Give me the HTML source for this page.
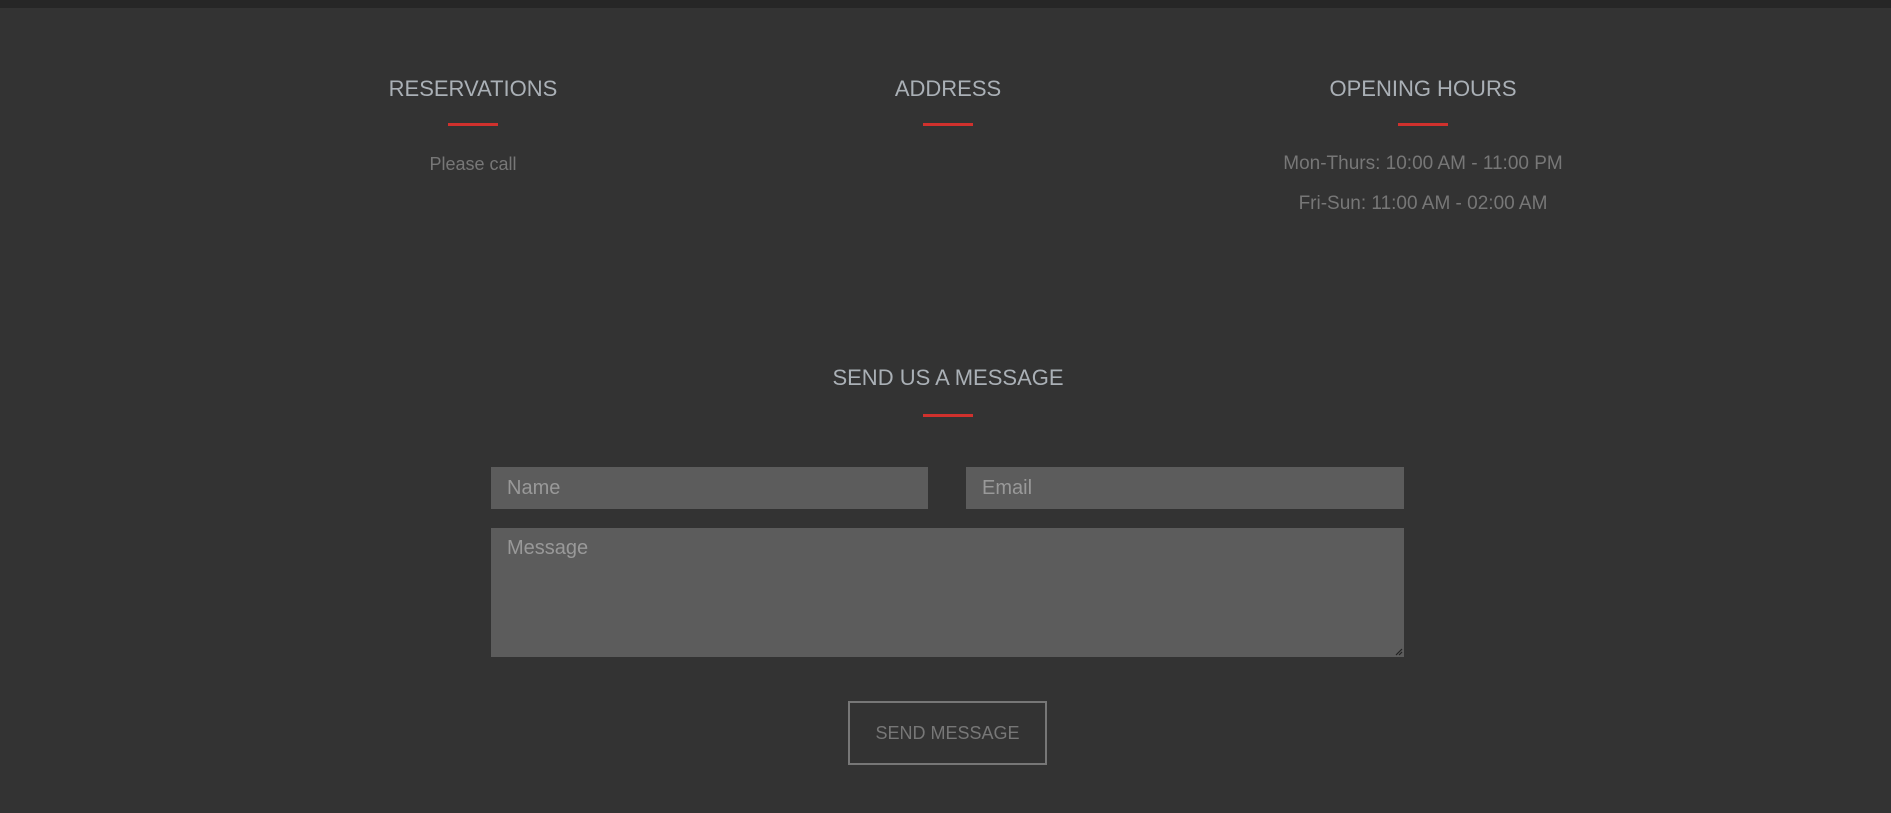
<!DOCTYPE html>
<html><head><meta charset="utf-8"><style>
*{margin:0;padding:0;box-sizing:border-box}
body{width:1891px;height:813px;background:#333;font-family:"Liberation Sans",sans-serif;position:relative;overflow:hidden}
.bar{position:absolute;left:0;top:0;width:100%;height:8px;background:#262626}
.h{position:absolute;color:#aab0b6;font-size:22px;text-align:center;width:476px;line-height:24px}
.r{position:absolute;height:3px;width:50px;background:#d0312d}
.t{position:absolute;color:#777;font-size:18px;text-align:center;width:476px;line-height:20px}
.in{position:absolute;background:#5c5c5c;color:#999;font-size:20px;padding-left:16px}
.btn{position:absolute;left:848px;top:701px;width:199px;height:64px;border:2px solid #777;color:#777;font-size:18px;text-align:center;line-height:60px}
</style></head><body>
<div class="bar"></div>
<div class="h" style="left:235px;top:77px">RESERVATIONS</div>
<div class="h" style="left:710px;top:77px">ADDRESS</div>
<div class="h" style="left:1185px;top:77px">OPENING HOURS</div>
<div class="r" style="left:448px;top:123px"></div>
<div class="r" style="left:923px;top:123px"></div>
<div class="r" style="left:1398px;top:123px"></div>
<div class="t" style="left:235px;top:154px">Please call</div>
<div class="t" style="left:1185px;top:154px;font-size:19px">Mon-Thurs: 10:00 AM - 11:00 PM</div>
<div class="t" style="left:1185px;top:194px;font-size:19px">Fri-Sun: 11:00 AM - 02:00 AM</div>
<div class="h" style="left:710px;top:366px">SEND US A MESSAGE</div>
<div class="r" style="left:923px;top:414px"></div>
<div class="in" style="left:491px;top:467px;width:437px;height:42px;line-height:42px">Name</div>
<div class="in" style="left:966px;top:467px;width:438px;height:42px;line-height:42px">Email</div>
<div class="in" style="left:491px;top:528px;width:913px;height:129px;padding-top:8px;line-height:24px">Message
<svg style="position:absolute;right:1px;bottom:1px" width="9" height="9"><path d="M8 2L2 8M8 5L5 8" stroke="#222" stroke-width="1.2"/></svg></div>
<div class="btn">SEND MESSAGE</div>
</body></html>
